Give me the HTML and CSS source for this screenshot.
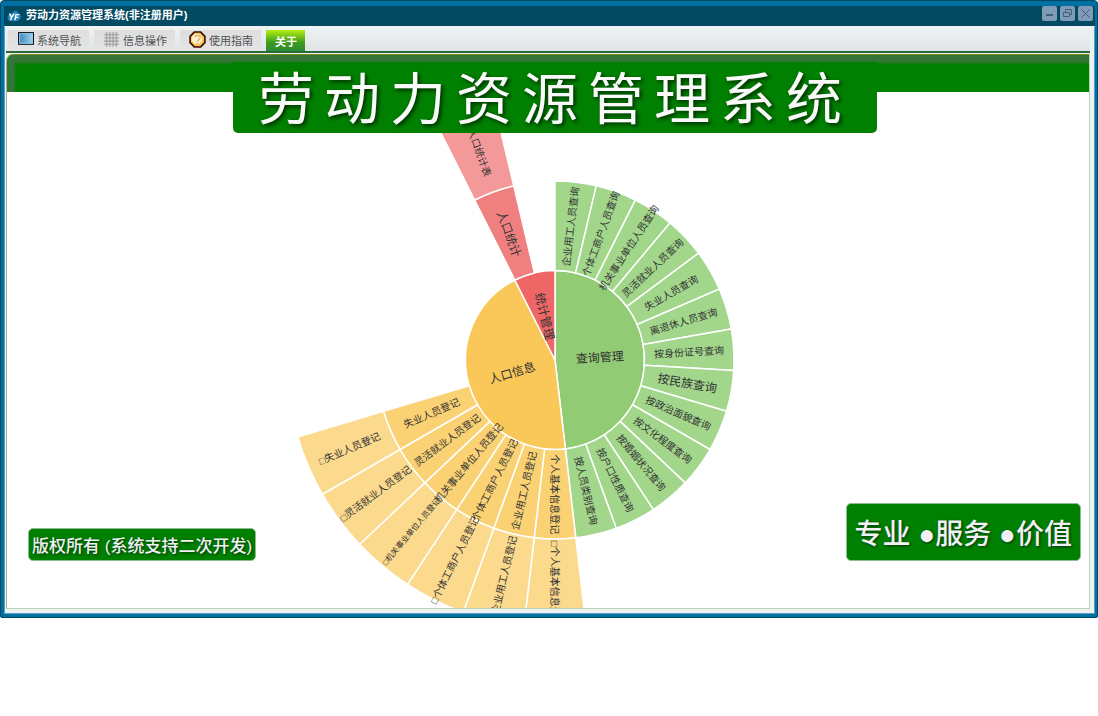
FILE: index.html
```
<!DOCTYPE html>
<html lang="zh-CN">
<head>
  <meta charset="UTF-8">
  <meta name="viewport" content="width=device-width, initial-scale=1.0"/>
  <title>劳动力资源管理系统</title>
  <link rel="stylesheet" href="styles.css">
</head>
<body>
  <div class="window">
    <!-- Title bar -->
    <header class="titlebar">
      <svg class="logo" viewBox="0 0 16 14" aria-hidden="true">
        <path d="M3 12 C0 12 0 7 2 6 C2 3 5 3 6 4 C7 0 12 1 12 4 C15 4 16 10 13 11 C11 13 6 13 3 12Z" fill="#2583b8"/>
        <path d="M2.500 4.500L5 8.500L7.500 4.500M5 8.500L3.500 11.500M8.500 11.500L9.500 5.500H13M9 8.500H12" fill="none" stroke="#fff" stroke-width="1.500"/>
      </svg>
      <h1 class="window-title">劳动力资源管理系统(非注册用户)</h1>
      <div class="window-buttons">
        <button type="button" aria-label="最小化"><svg viewBox="0 0 15 15"><path d="M4 9H11"/></svg></button>
        <button type="button" aria-label="还原"><svg viewBox="0 0 15 15"><path class="thin" d="M5.5 6.5V3.5H11.5V8.5H9.5M3.5 6.5H9.5V10.5H3.5Z"/></svg></button>
        <button type="button" aria-label="关闭"><svg viewBox="0 0 15 15"><path class="thin" d="M3.5 3.5L11.5 11.5M11.5 3.5L3.5 11.5"/></svg></button>
      </div>
    </header>

    <div class="window-body">
      <!-- Toolbar -->
      <nav class="toolbar">
        <button type="button" class="tab">
          <svg class="icon" viewBox="0 0 16 16" aria-hidden="true">
            <defs>
              <linearGradient id="screen"><stop offset="0" stop-color="#3b82b8"/><stop offset="1" stop-color="#a4d6f5"/></linearGradient>
            </defs>
            <rect x="1.500" y="1.500" width="14" height="11" fill="url(#screen)" stroke="#111"/>
            <path d="M2.500 11.500V2.500H14.500V11.500Z" fill="none" stroke="#8cc8ee"/>
          </svg>
          系统导航
        </button>
        <button type="button" class="tab">
          <svg class="icon" viewBox="0 0 16 16" aria-hidden="true">
            <path d="M3.5 1V15M6.5 1V15M9.5 1V15M12.5 1V15M1 3.5H15M1 6.5H15M1 9.5H15M1 12.5H15" fill="none" stroke="#9a9a9a"/>
          </svg>
          信息操作
        </button>
        <button type="button" class="tab">
          <svg class="icon" viewBox="0 0 16 16" aria-hidden="true">
            <path d="M5 1H11L15 5V11L11 15H5L1 11V5Z" fill="#f8c443" stroke="#3a0c08" stroke-width="1.5"/>
            <circle cx="7.500" cy="7.500" r="5" fill="#fff0c8"/>
            <path d="M6 6C6 3.500 10.500 3.500 10.500 6C10.500 8 8 7.500 8 10M8 11V12.500" fill="none" stroke="#e0b878" stroke-width="1.500"/>
          </svg>
          使用指南
        </button>
        <button type="button" class="tab tab-about">关于</button>
      </nav>

      <!-- Main stage -->
      <main class="stage">
        <div class="band"></div>
        <svg id="sunburst" class="sunburst" viewBox="-270 -268 540 516" role="img" aria-label="系统功能旭日图"></svg>
        <div class="banner"><h2>劳动力资源管理系统</h2></div>
        <p class="badge copyright">版权所有 (系统支持二次开发)</p>
        <p class="badge slogan">专业 ●服务 ●价值</p>
      </main>
    </div>
  </div>

  <script>
    // span = number of slices, 27 slices make the full circle
    const TOTAL = 27;
    const RING = 89.5;

    const greens = ['企业用工人员查询', '个体工商户人员查询', '机关事业单位人员查询', '灵活就业人员查询',
      '失业人员查询', '离退休人员查询', '按身份证号查询', '按民族查询', '按政治面貌查询',
      '按文化程度查询', '按婚姻状况查询', '按户口性质查询', '按人员类别查询'];
    const yellows = ['个人基本信息登记', '企业用工人员登记', '个体工商户人员登记',
      '机关事业单位人员登记', '灵活就业人员登记', '失业人员登记'];

    const data = [
      {
        name: '查询管理', span: 13, size: 12, colors: ['#91cc75', '#a2d68b'],
        children: greens.map(name => ({ name, size: name === '按民族查询' ? 12 : 10 }))
      },
      {
        name: '人口信息', span: 12, size: 12, colors: ['#fac858', '#fad274', '#fbd98d'],
        children: yellows.map(name => ({
          name, size: 10,
          children: [{ name: '□' + name, size: name.length > 9 ? 8 : 10 }]
        }))
      },
      {
        name: '统计管理', span: 2, size: 12, colors: ['#ee6666', '#f08080', '#f49999'],
        children: [{ name: '人口统计', size: 12, children: [{ name: '□人口统计表', size: 10 }] }]
      }
    ];

    const svg = document.getElementById('sunburst');
    const slices = [];
    const labels = [];

    function point(r, deg) {
      const a = deg * Math.PI / 180;
      return (r * Math.sin(a)).toFixed(2) + ' ' + (-r * Math.cos(a)).toFixed(2);
    }

    function draw(node, level, start, span, colors) {
      const end = start + span * 360 / TOTAL;
      const r0 = level * RING;
      const r1 = r0 + RING;
      const mid = (start + end) / 2;
      const flip = mid > 179 ? 90 : -90;

      slices.push(`<path fill="${colors[level]}" d="M${point(r0, start)} L${point(r1, start)} A${r1} ${r1} 0 0 1 ${point(r1, end)} L${point(r0, end)} A${r0} ${r0} 0 0 0 ${point(r0, start)}Z"/>`);

      // the slice straight below the centre reads downwards, the rest of the left side inwards
      const turn = Math.abs(mid - 180) < 1 ? 90 : mid + flip;
      labels.push(`<text font-size="${node.size}" transform="translate(${point((r0 + r1) / 2, mid)}) rotate(${turn})" dy="0.36em">${node.name}</text>`);

      (node.children || []).forEach((child, i) => {
        draw(child, level + 1, start + i * 360 / TOTAL, 1, colors);
      });
    }

    let angle = 0;
    data.forEach(node => {
      draw(node, 0, angle, node.span, node.colors);
      angle += node.span * 360 / TOTAL;
    });
    svg.innerHTML = slices.join('') + labels.join('');
  </script>
</body>
</html>
```
FILE: styles.css
```
body {
  margin: 0;
  background-color: #fff;
  font-family: "Liberation Sans", "Noto Sans CJK SC", sans-serif;
}

h1, h2, p {
  margin: 0;
}

button {
  border: none;
  padding: 0;
  font-family: inherit;
  cursor: pointer;
}

.window {
  box-sizing: border-box;
  padding: 5px 2px 3px 3px;
  border: 1px solid #024a63;
  border-radius: 4px 4px 2px 2px;
  background-color: #0070a3;
}

.titlebar {
  display: flex;
  align-items: center;
  gap: 4px;
  height: 20px;
  padding: 0 2px 0 3px;
  background-color: #014a62;
}

.logo {
  width: 15px;
  height: 14px;
}

.window-title {
  flex: 1;
  color: #fff;
  font-size: 11px;
  line-height: 16px;
  padding-bottom: 2px;
}

.window-buttons {
  display: flex;
  gap: 3px;
  padding-bottom: 5px;
}

.window-buttons button {
  width: 15px;
  height: 15px;
  border-radius: 2px;
  background-color: #7f9bb5;
}

.window-buttons svg {
  display: block;
  fill: none;
  stroke: #3f617c;
  stroke-width: 2;
}

.window-buttons .thin {
  stroke-width: 1;
}

.window-body {
  padding: 0 4px 4px 1px;
  border: 1px solid #5aa0c4;
  border-top-color: #eef4f8;
  background-color: #edf1f3;
}

.toolbar {
  display: flex;
  align-items: flex-end;
  gap: 5px;
  height: 24px;
  padding-left: 2px;
  border-bottom: 2px solid #2a6a35;
  background: linear-gradient(#eff3f4, #dfe4e6);
}

.tab {
  display: flex;
  align-items: center;
  gap: 3px;
  height: 21px;
  padding: 0 8px 2px 9px;
  background: linear-gradient(#dedede, #e6e4e4);
  color: #4d5356;
  font-size: 11px;
}

.tab-about {
  padding: 0 8px 0 9px;
  background: linear-gradient(#b4ee12, #3c9a20 60%, #2f8b35);
  color: #fff;
  font-weight: bold;
}

.icon {
  width: 17px;
  height: 17px;
}

.stage {
  position: relative;
  overflow: hidden;
  margin-top: 1px;
  border: 1px solid #b8d8b0;
  border-top-color: #7c8a1c;
  border-left-color: #a8b87c;
  border-radius: 7px 0 0 0;
  background-color: #fff;
}

.band {
  height: 37px;
  background-color: #008000;
  box-shadow: inset 9px 9px 3px -1px #357538;
}

/* the chart sits a little right of the middle, like the banner */
.sunburst {
  display: block;
  height: 516px;
  width: 100%;
  box-sizing: border-box;
  padding-left: 14px;
}

.sunburst path {
  stroke: #fff;
  stroke-width: 1.5;
}

.sunburst text {
  fill: #333;
  text-anchor: middle;
}

.banner {
  position: absolute;
  top: 7px;
  left: 14px;
  right: 0;
  display: flex;
  justify-content: center;
}

.banner h2 {
  padding: 5px 25px 0;
  border-radius: 0 0 5px 5px;
  background-color: #008000;
  color: #fafafa;
  font-size: 56px;
  font-weight: normal;
  line-height: 66px;
  letter-spacing: 10px;
  text-shadow: 2px 2px 4px #002800;
  white-space: nowrap;
}

.badge {
  position: absolute;
  bottom: 47px;
  border: 1px solid #8fbc8f;
  border-radius: 5px;
  background-color: #008000;
  color: #f0f0f5;
  font-weight: 500;
  text-shadow: 1px 1px 3px #003000;
  white-space: nowrap;
}

.copyright {
  left: 21px;
  padding: 4px 3px 0;
  font-size: 17px;
  line-height: 27px;
}

.slogan {
  right: 8px;
  padding: 6px 8px 0;
  font-size: 28px;
  line-height: 50px;
}
```
